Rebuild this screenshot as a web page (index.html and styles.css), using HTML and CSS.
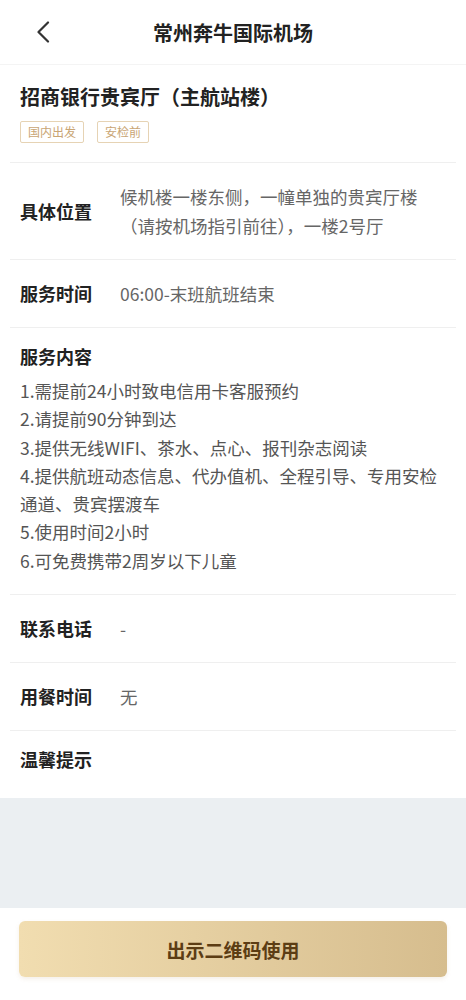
FILE: index.html
```html
<!DOCTYPE html>
<html lang="zh-CN">
<head>
  <meta charset="UTF-8">
  <meta name="viewport" content="width=device-width, initial-scale=1.0">
  <title>常州奔牛国际机场</title>
  <link rel="stylesheet" href="styles.css">
</head>
<body>
  <div class="page">
    <div class="header">
      <span class="back">
        <svg width="14" height="22" viewBox="0 0 14 22"><path d="M12 1.5 L2.5 11 L12 20.5" fill="none" stroke="#333" stroke-width="2.2" stroke-linecap="round" stroke-linejoin="round"/></svg>
      </span>
      <h1>常州奔牛国际机场</h1>
    </div>

    <div class="detail">
      <div class="intro">
        <h2>招商银行贵宾厅（主航站楼）</h2>
        <div class="tags">
          <span class="tag">国内出发</span>
          <span class="tag">安检前</span>
        </div>
      </div>

      <div class="row">
        <span class="label">具体位置</span>
        <span class="value">候机楼一楼东侧，一幢单独的贵宾厅楼（请按机场指引前往），一楼2号厅</span>
      </div>
      <div class="row">
        <span class="label">服务时间</span>
        <span class="value">06:00-末班航班结束</span>
      </div>
      <div class="row block">
        <span class="label">服务内容</span>
        <div class="list">
          <p>1.需提前24小时致电信用卡客服预约</p>
          <p>2.请提前90分钟到达</p>
          <p>3.提供无线WIFI、茶水、点心、报刊杂志阅读</p>
          <p>4.提供航班动态信息、代办值机、全程引导、专用安检通道、贵宾摆渡车</p>
          <p>5.使用时间2小时</p>
          <p>6.可免费携带2周岁以下儿童</p>
        </div>
      </div>
      <div class="row">
        <span class="label">联系电话</span>
        <span class="value">-</span>
      </div>
      <div class="row">
        <span class="label">用餐时间</span>
        <span class="value">无</span>
      </div>
      <div class="row last">
        <span class="label">温馨提示</span>
      </div>
    </div>

    <div class="spacer"></div>

    <div class="footer">
      <button class="qr-btn">出示二维码使用</button>
    </div>
  </div>
</body>
</html>
```

FILE: styles.css
```css
body {
  margin: 0;
  font-family: "Noto Sans CJK SC", "Noto Sans", sans-serif;
  background-color: #fff;
  color: #222;
}

.page {
  display: flex;
  flex-direction: column;
  min-height: 100vh;
}

.header {
  height: 64px;
  display: flex;
  align-items: center;
  justify-content: center;
  border-bottom: 1px solid #f4f4f4;
  position: relative;
}

.header h1 {
  margin: 0;
  font-size: 20px;
  font-weight: bold;
  color: #222;
}

.back {
  position: absolute;
  left: 36px;
  top: 21px;
  display: flex;
}

.detail {
  padding: 0 10px;
}

.intro {
  padding: 17px 10px 19px;
}

.intro h2 {
  margin: 0;
  font-size: 20px;
  line-height: 30px;
  font-weight: bold;
  color: #222;
}

.tags {
  display: flex;
  gap: 13px;
  margin-top: 9px;
}

.tag {
  font-size: 12px;
  line-height: 20px;
  padding: 0 7px;
  color: #c9a574;
  border: 1px solid #e6d3b4;
  border-radius: 2px;
}

.row {
  display: flex;
  align-items: center;
  border-top: 1px solid #efefef;
  padding: 19px 10px;
  font-size: 17.5px;
  line-height: 29px;
}

.label {
  flex: none;
  width: 72px;
  margin-right: 28px;
  font-size: 18px;
  font-weight: bold;
  color: #222;
}

.value {
  color: #666;
}

.row.block {
  display: block;
  padding: 14px 10px 19px;
}

.row.block .label {
  display: block;
  line-height: 28px;
}

.list {
  margin-top: 7px;
  color: #555;
}

.list p {
  margin: 0;
  line-height: 28.3px;
}

.row.last {
  padding: 14px 10px 24px;
}

.spacer {
  flex: 1;
  background: #ebeff2;
}

.footer {
  padding: 13px 19px 23px;
  background: #fff;
}

.qr-btn {
  display: block;
  width: 100%;
  height: 56px;
  border: none;
  border-radius: 6px;
  background: linear-gradient(90deg, #f1ddb0, #d6bd8e);
  color: #5c3d14;
  font-family: inherit;
  font-size: 19px;
  font-weight: bold;
  box-shadow: 0 2px 4px rgba(180, 150, 100, 0.15);
}
```
